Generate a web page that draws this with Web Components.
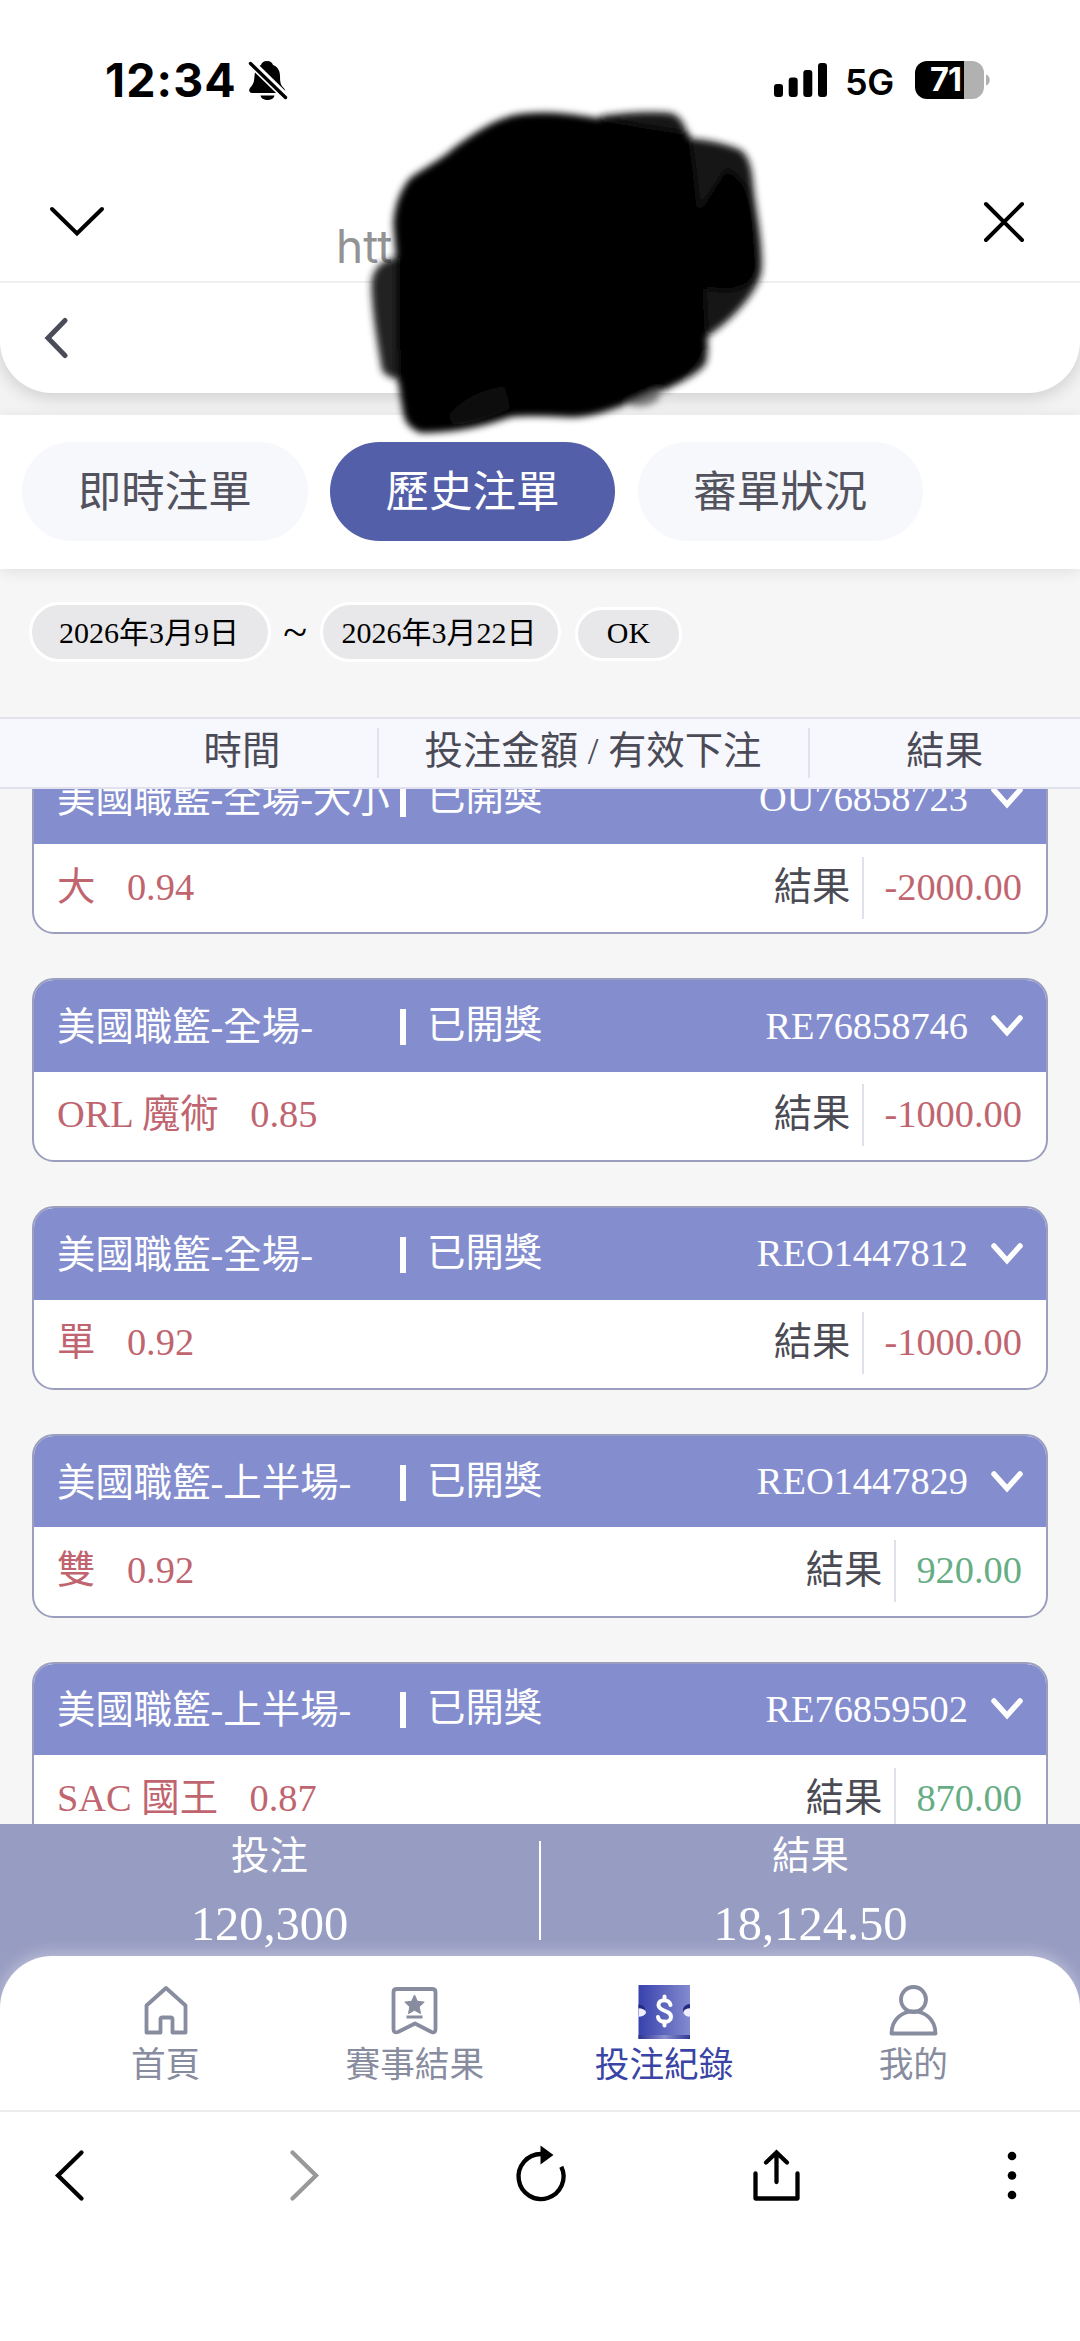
<!DOCTYPE html>
<html lang="zh-Hant">
<head>
<meta charset="utf-8">
<title>投注紀錄</title>
<style>
body{margin:0;width:1080px;height:2341px;overflow:hidden;background:#fff;font-family:"Liberation Serif","Noto Sans CJK TC",serif;color:#4b4b57}
</style>
</head>
<body>
<bet-app></bet-app>
<script>
const define=(name,render)=>customElements.define(name,class extends HTMLElement{
  constructor(){super();this.attachShadow({mode:'open'});}
  connectedCallback(){this.shadowRoot.innerHTML=render(this);}
});

define('status-bar',()=>`
<style>
:host{display:flex;height:160px;box-sizing:border-box;padding:0 90px 0 105px;align-items:center;justify-content:space-between;font-family:Inter,sans-serif;color:#000}
div{display:flex;align-items:center}
.time{font-size:46.5px;font-weight:700;line-height:50px;letter-spacing:1.1px;width:131px;margin-right:12px;white-space:nowrap}
.net{font-size:36px;font-weight:600;line-height:40px;width:52px;margin:3px 18px 0 17px;white-space:nowrap;letter-spacing:-.5px}
.bat{width:69px;height:38px;border-radius:12px;background:linear-gradient(90deg,#000 49px,#b1b1b1 49px);color:#fff;font-size:32.5px;font-weight:700;line-height:38px;box-sizing:border-box;padding-left:15px;letter-spacing:-1px}
svg{display:block}
</style>
<div><span class="time">12:34</span>
<svg width="40" height="40" viewBox="0 0 40 40"><path d="M19 1c3.500 0 5.500 2 6 4 5 2 7 6 7 11 0 8 1 9 4.500 13 1.500 2 .5 4-1.500 4H4c-3 0-3.500-3-2-5 4-4.500 4-6 4.500-12C7 10 9 7 13 5c.5-2 2.500-4 6-4Z"/><path d="M12.500 35.500h14c-1 6-13 6-14 0Z"/><path d="M1 1L40 39" stroke="#fff" stroke-width="8"/><path d="M2.500 3.500L37.500 37.500" stroke="#000" stroke-width="3.400" stroke-linecap="round"/></svg></div>
<div><svg width="54" height="36" viewBox="0 0 54 36"><rect x="0" y="22" width="9" height="13" rx="3"/><rect x="14.700" y="15.500" width="9" height="19.500" rx="3"/><rect x="29.300" y="8" width="9" height="27" rx="3"/><rect x="44" y="1" width="9" height="34" rx="3"/></svg>
<span class="net">5G</span><span class="bat">71</span><svg width="6" height="14" viewBox="0 0 6 14"><path d="M2 1.500C7 3 7 11 2 12.500Z" fill="#b1b1b1"/></svg></div>`);

define('url-bar',()=>`
<style>
:host{display:flex;height:121px;align-items:center;box-sizing:content-box;border-bottom:2px solid #efefef;font-family:Inter,sans-serif;color:#939393}
span{font-size:46px;line-height:50px;margin:50px 0 0 231px}
svg{display:block;fill:none;stroke:#000;stroke-width:4;stroke-linecap:round}
.a{margin:4px 0 0 49px}.b{margin:3px 55px 0 auto}
</style>
<svg class="a" width="56" height="33" viewBox="0 0 56 33"><path d="M3 3L28 27.500L53 3" stroke-linejoin="miter"/></svg>
<span>htt</span>
<svg class="b" width="42" height="42" viewBox="0 0 42 42"><path d="M3 3L39 39M39 3L3 39"/></svg>`);

define('page-bar',()=>`
<style>
:host{display:block;height:132px;background:#f3f3f3;overflow:hidden}
div{height:110px;background:#fff;border-radius:0 0 52px 52px;box-shadow:0 4px 18px rgba(0,0,0,.16);display:flex;align-items:center}
svg{display:block;margin:0 0 0 43px}
</style><div><svg width="26" height="42" viewBox="0 0 26 42"><path d="M22 3.500L5 21L22 38.500" fill="none" stroke="#4b4c59" stroke-width="5" stroke-linecap="round"/></svg></div>`);

define('tab-pill',()=>`
<style>
:host{display:flex;width:285.500px;height:99px;border-radius:50px;background:#f7f8fc;color:#52535e;font:43.500px/50px "Noto Sans CJK TC",sans-serif;align-items:center;justify-content:center;flex:none}
:host([active]){background:#545fa9;color:#fff}
span{margin-top:-6px}
</style><span><slot></slot></span>`);

define('tab-row',()=>`
<style>
:host{display:flex;height:154px;box-sizing:border-box;background:#fff;padding:27px 0 0 22px;gap:22.300px;box-shadow:0 3px 14px rgba(0,0,0,.09);position:relative;flex:none}
</style><slot></slot>`);

define('date-filter',()=>`
<style>
:host{display:flex;height:148px;box-sizing:border-box;background:#f6f6f6;padding:33px 0 0 28.500px;align-items:flex-start;color:#000;font-size:30px}
.p{box-sizing:border-box;border:3px solid #fff;border-radius:31px;background:#e8e8ea;height:60px;width:242px;line-height:55px;padding-left:27.500px;white-space:nowrap}
.t{width:49.500px;font-size:44px;line-height:62px;text-align:center}
.p.e{width:241px;padding-left:18.500px}
.ok{height:54px;width:107px;margin:5px 0 0 14px;padding:0;text-align:center;line-height:46px}
</style><div class="p">2026年3月9日</div><div class="t">~</div><div class="p e">2026年3月22日</div><div class="p ok">OK</div>`);

define('column-head',()=>`
<style>
:host{display:flex;height:72px;box-sizing:border-box;border:solid #e1e2ed;border-width:2px 0;background:#f7f8fd;padding-left:107.500px;align-items:center;font-size:38.400px;line-height:50px;white-space:nowrap}
div{text-align:center;height:50px}
div span{display:block;margin-top:-2px}
.a{width:269px}.b{width:429px;border:solid #e1e2ed;border-width:0 2px}.c{flex:1}
</style><div class="a"><span>時間</span></div><div class="b"><span>投注金額 / 有效下注</span></div><div class="c"><span>結果</span></div>`);

define('bet-card',e=>{const g=k=>e.getAttribute(k);return`
<style>
:host{display:block;box-sizing:border-box;height:183.700px;border:2.500px solid #9b9fbd;border-radius:22px;overflow:hidden;background:#fff;font-size:38.400px;line-height:50px;white-space:nowrap;flex:none}
div{display:flex;align-items:center;box-sizing:border-box}
.h{height:91.500px;background:#848ecf;color:#fff;padding:0 22px 1px 23px}
.t{width:343px;padding-top:3px}
.s{border-left:6px solid #fff;height:36px;line-height:33px;padding-left:21px;margin-top:3px}
.n{margin-left:auto}
svg{margin:1px 0 0 22px;display:block}
.b{height:87px;padding:0 24px 2px 23px;color:#c0656f}
.o{margin-left:31.500px}
.l{margin-left:auto;color:#4b4b55}
.v{border-left:2.500px solid #e0e0ea;margin:2px 0 0 12px;height:62px;padding-left:20px}
.v span{margin-top:-2px}
.win{color:#66ad83}
</style>
<div class="h"><span class="t">${g('game')}</span><span class="s">已開獎</span><span class="n">${g('no')}</span><svg width="34" height="24" viewBox="0 0 34 24"><path d="M4 4L17 18.500L30 4" fill="none" stroke="#fff" stroke-width="5.500" stroke-linecap="round"/></svg></div>
<div class="b"><span>${g('pick')}</span><span class="o">${g('odds')}</span><span class="l">結果</span><div class="v ${g('sum')[0]==='-'?'':'win'}"><span>${g('sum')}</span></div></div>`;});

define('bet-list',()=>`
<style>
:host{display:block;height:1035px;background:#f6f6f6;overflow:hidden}
div{display:flex;flex-direction:column;gap:44.100px;margin:-38.500px 32px 0}
</style><div><slot></slot></div>`);

define('total-box',()=>`
<style>
:host{display:flex;height:132px;box-sizing:border-box;color:#fff;text-align:center}
div{flex:1}
i{width:2px;height:99px;background:#fff;margin-top:17px}
span,b{display:block;font-weight:400}
span{font-size:38.400px;line-height:50px;margin-top:7px}
b{font-size:48.500px;line-height:56px;margin-top:15px}
</style><div><span>投注</span><b>120,300</b></div><i></i><div><span>結果</span><b>18,124.50</b></div>`);

const ICONS={
home:`<path d="M6.500 21.500L26 4L45.500 21.500V48.500H32.500V35.500Q32.500 33.500 30.500 33.500H22.500Q20.500 33.500 20.500 35.500V48.500H6.500Z" transform="translate(1 0)"/>`,
result:`<path d="M9 5H44Q47.500 5 47.500 8V45Q47.500 49.500 43.500 48L27 39.500L10 48Q5.500 49.500 5.500 45V8Q5.500 5 9 5Z"/><path d="M26.500 11l2.900 6.300 6.800.8-5 4.700 1.300 6.800-6-3.300-6 3.300 1.300-6.800-5-4.700 6.800-.8Z" fill="currentColor" stroke-width="1"/><path d="M18.500 33H34.500" stroke-width="3"/>`,
bets:`<defs><linearGradient id="g"><stop offset="0" stop-color="#3741ac"/><stop offset="1" stop-color="#858cd0"/></linearGradient><linearGradient id="h"><stop offset="0" stop-color="#2a3190"/><stop offset=".5" stop-color="#8a8fce"/><stop offset="1" stop-color="#2e3594"/></linearGradient><clipPath id="c"><rect x="0.500" y="1" width="51.500" height="54"/></clipPath></defs><g clip-path="url(#c)" stroke="none"><rect width="53" height="55" fill="url(#g)"/><rect y="51" width="53" height="4" fill="url(#h)"/><ellipse cx="1" cy="26" rx="6" ry="5.500" fill="#232a80"/><ellipse cx="52" cy="26" rx="7" ry="6" fill="#232a80"/><ellipse cx="0" cy="28.500" rx="8" ry="4.200" fill="#eef"/><ellipse cx="52" cy="28.500" rx="6.500" ry="4.200" fill="#eef"/></g><path d="M32.500 21C31.500 14.500 20.500 14.500 20.500 21C20.500 28 33 25.500 33 33C33 39.500 20.500 39.500 20 33M26.500 12.500V16M26.500 37.500V41.500" stroke="#fff" stroke-width="4" stroke-linecap="round"/>`,
mine:`<circle cx="26.500" cy="15.500" r="12.500"/><path d="M4.500 49.500C5 20 48 20 48.500 49.500Z"/>`};
define('nav-item',e=>`
<style>
:host{display:flex;flex:1;flex-direction:column;align-items:center;color:#888c9f;font:34.700px/46px "Noto Sans CJK TC",sans-serif;white-space:nowrap}
:host([active]){color:#3a44a5}
svg{display:block;margin-bottom:-1px}
</style><svg width="53" height="56" viewBox="0 0 53 56" fill="none" stroke="currentColor" stroke-width="3.800" stroke-linejoin="round">${ICONS[e.getAttribute('icon')]}</svg><span><slot></slot></span>`);

define('nav-bar',()=>`
<style>
:host{display:flex;height:154px;box-sizing:border-box;padding:28px 42px 0 41px;background:#fff;border-radius:52px 52px 0 0;box-shadow:0 -2px 16px rgba(255,255,255,.42)}
</style><slot></slot>`);

define('browser-bar',()=>`
<style>
:host{display:flex;height:231px;box-sizing:border-box;border-top:2px solid #ececec;padding:30px 26px 0 28px;justify-content:space-between;align-items:flex-start}
svg{display:block;fill:none;stroke:#000;stroke-width:4.300;stroke-linecap:round}
</style>
<svg width="84" height="70" viewBox="0 0 84 70"><path d="M53.500 10.500L30 33.500L53.500 56.500"/></svg>
<svg width="84" height="70" viewBox="0 0 84 70"><path d="M28.500 10.500L52 33.500L28.500 56.500" stroke="#999"/></svg>
<svg width="84" height="70" viewBox="0 0 84 70"><path d="M42 12A22.500 22.500 0 1 0 62.300 24.700" stroke-linecap="butt"/><path d="M41.500 3.500L54.500 13L41.500 22.500Z" fill="#000" stroke="none"/></svg>
<svg width="84" height="70" viewBox="0 0 84 70"><path d="M20.500 31.500V56.500H62.500V31.500" stroke-linejoin="round"/><path d="M41.500 40V11M31 20.500L41.500 10.500L52 20.500"/></svg>
<svg width="84" height="70" viewBox="0 0 84 70"><g fill="#000" stroke="none"><circle cx="42" cy="14" r="4.300"/><circle cx="42" cy="33.500" r="4.300"/><circle cx="42" cy="53" r="4.300"/></g></svg>`);

define('brush-mark',()=>`
<style>
:host{display:block;position:absolute;left:320px;top:100px;width:460px;height:350px;z-index:5}
svg{display:block;overflow:visible}
</style>
<svg width="460" height="350" viewBox="0 0 1380 1050"><defs><filter id="b" x="-10%" y="-10%" width="120%" height="120%"><feGaussianBlur stdDeviation="11"/></filter></defs>
<g filter="url(#b)">
<g fill="#141414">
<path d="M840 48C920 36 990 34 1050 38Q1092 48 1105 115L1100 160H840Z"/>
<path d="M1100 115Q1200 122 1262 150Q1290 170 1297 230C1306 330 1330 420 1325 510C1318 570 1240 660 1160 710L1050 720V120Z"/>
<path d="M240 470Q160 480 154 550C155 630 170 720 186 810Q200 838 260 840Z" fill="#222"/>
<path d="M1155 690Q1170 740 1158 790C1130 830 1070 850 1015 880L900 850Z"/>
<path d="M1015 840L1018 895Q990 922 950 918L860 900Z" fill="#777"/>
</g>
<g fill="#000">
<path d="M580 46Q620 36 700 38C780 42 850 58 1010 84L1108 100C1130 240 1136 320 1150 500L1162 725C1140 810 1080 850 1010 872C930 905 850 950 750 952Q640 945 575 950C500 975 420 998 300 998Q255 980 250 940L230 820L228 470L220 370Q225 290 270 235C310 205 370 175 400 145C460 100 520 60 580 46Z"/>
<path d="M1215 210C1270 220 1297 290 1303 380L1312 500Q1290 600 1140 560L1120 360Z"/>
</g>
<path d="M385 945C430 895 490 865 553 860L572 925C530 945 460 970 400 975Z" fill="#101010"/>
</g></svg>`);

define('bet-app',()=>`
<style>
:host{display:flex;flex-direction:column;width:1080px;height:2341px;position:relative;background:#fff}
:host>*{flex:none}
.foot{background:#979cc2}
</style>
<status-bar></status-bar><url-bar></url-bar><page-bar></page-bar>
<tab-row><tab-pill>即時注單</tab-pill><tab-pill active>歷史注單</tab-pill><tab-pill>審單狀況</tab-pill></tab-row>
<date-filter></date-filter><column-head></column-head>
<bet-list>
<bet-card game="美國職籃-全場-大小" no="OU76858723" pick="大" odds="0.94" sum="-2000.00"></bet-card>
<bet-card game="美國職籃-全場-" no="RE76858746" pick="ORL 魔術" odds="0.85" sum="-1000.00"></bet-card>
<bet-card game="美國職籃-全場-" no="REO1447812" pick="單" odds="0.92" sum="-1000.00"></bet-card>
<bet-card game="美國職籃-上半場-" no="REO1447829" pick="雙" odds="0.92" sum="920.00"></bet-card>
<bet-card game="美國職籃-上半場-" no="RE76859502" pick="SAC 國王" odds="0.87" sum="870.00"></bet-card>
</bet-list>
<div class="foot"><total-box></total-box>
<nav-bar><nav-item icon="home">首頁</nav-item><nav-item icon="result">賽事結果</nav-item><nav-item icon="bets" active>投注紀錄</nav-item><nav-item icon="mine">我的</nav-item></nav-bar></div>
<browser-bar></browser-bar><brush-mark></brush-mark>`);
</script>
</body>
</html>
